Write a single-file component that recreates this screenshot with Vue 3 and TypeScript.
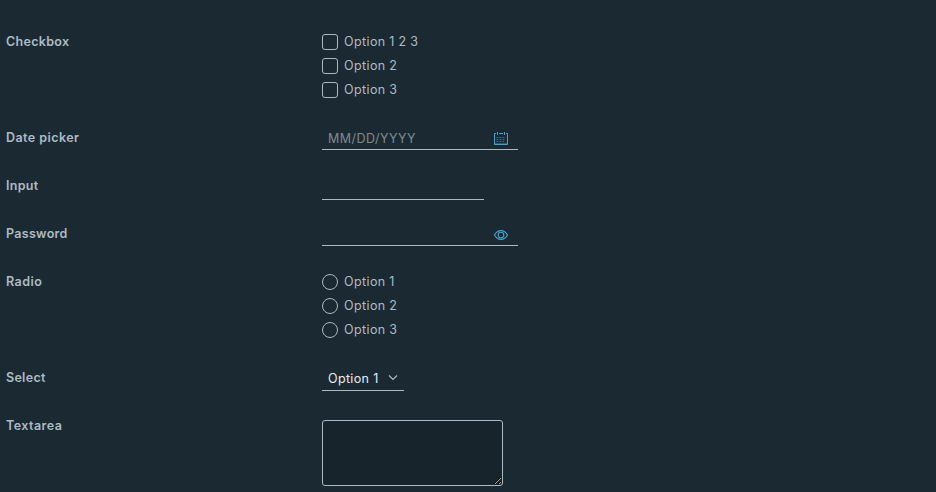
<script setup lang="ts">
import { ref } from 'vue'

const checkboxes = ['Option 1 2 3', 'Option 2', 'Option 3']
const radios = ['Option 1', 'Option 2', 'Option 3']
const checked = ref<string[]>([])
const picked = ref<string>('')
const date = ref<string>('')
const text = ref<string>('')
const password = ref<string>('')
const notes = ref<string>('')
</script>

<template>
  <form class="form" @submit.prevent>
    <div class="row">
      <span class="label">Checkbox</span>
      <div class="options">
        <label v-for="item in checkboxes" :key="item" class="option">
          <input v-model="checked" class="mark box" type="checkbox" :value="item" />
          <span class="option-text">{{ item }}</span>
        </label>
      </div>
    </div>
    <div class="row">
      <label class="label wide" for="date">Date picker</label>
      <div class="field">
        <input id="date" v-model="date" class="date" type="text" placeholder="MM/DD/YYYY" />
        <svg class="icon" viewBox="0 0 16 16" fill="none" stroke="currentColor">
          <path d="M3 3.5H1.5V14.5H14.5V3.5H13M6 3.5H10" />
          <path d="M4.5 2V5M11.5 2V5" />
          <path d="M1.5 13.8H14.5" opacity=".6" />
          <path d="M3.5 7.5H12.5M3.5 9.5H12.5M3.5 11.5H12.5" stroke-dasharray="1.8 1.2" opacity=".6" />
        </svg>
      </div>
    </div>
    <div class="row">
      <label class="label" for="text">Input</label>
      <input id="text" v-model="text" class="plain" type="text" />
    </div>
    <div class="row">
      <label class="label" for="password">Password</label>
      <div class="field">
        <input id="password" v-model="password" type="password" />
        <svg class="icon" viewBox="0 0 16 16" fill="none" stroke="currentColor" stroke-width="1.1">
          <path d="M1.4 9C3 6.2 5.3 4.6 8 4.6S13 6.2 14.6 9C13 11.8 10.7 13.4 8 13.4S3 11.8 1.4 9Z" />
          <circle cx="8" cy="9" r="2.8" />
        </svg>
      </div>
    </div>
    <div class="row">
      <span class="label wide">Radio</span>
      <div class="options">
        <label v-for="item in radios" :key="item" class="option">
          <input v-model="picked" class="mark circle" type="radio" :value="item" />
          <span class="option-text">{{ item }}</span>
        </label>
      </div>
    </div>
    <div class="row">
      <span class="label">Select</span>
      <button class="select" type="button">
        <span>Option 1</span>
        <svg class="caret" viewBox="0 0 10 8" fill="none" stroke="currentColor" stroke-width="1.2">
          <path d="M1 1.5L5 5.5L9 1.5" />
        </svg>
      </button>
    </div>
    <div class="row">
      <label class="label wide" for="notes">Textarea</label>
      <textarea id="notes" v-model="notes"></textarea>
    </div>
  </form>
</template>

<style>
body {
  background: #1b2a32;
  overflow: hidden;
}
</style>

<style scoped>
.form {
  box-sizing: border-box;
  height: 492px;
  padding: 30px 6px 0;
  display: flex;
  flex-direction: column;
  gap: 24px;
  overflow: hidden;
  background: #1b2a32;
  color: #adbbc4;
  font: 400 12.5px/24px Inter, "Liberation Sans", sans-serif;
  letter-spacing: 0.4px;
}
.row {
  display: grid;
  grid-template-columns: 316px 1fr;
  align-items: start;
  min-height: 24px;
}
.row:not(:has(.options)) {
  height: 24px;
}
.label {
  font-weight: 600;
  line-height: 23px;
  letter-spacing: 0.3px;
  justify-self: start;
}
.wide {
  letter-spacing: 0.45px;
}
.options {
  display: flex;
  flex-direction: column;
}
.option {
  display: flex;
  align-items: center;
  align-self: start;
  gap: 6px;
  height: 24px;
}
.option-text {
  height: 24px;
  line-height: 23px;
  word-spacing: -0.2px;
}
.mark {
  appearance: none;
  box-sizing: border-box;
  width: 16px;
  height: 16px;
  margin: 0;
  border: 1px solid #acbac3;
}
.box {
  border-radius: 3px;
}
.circle {
  border-radius: 50%;
}
input,
textarea,
button {
  box-sizing: border-box;
  margin: 0;
  border-radius: 0;
  outline: none;
  color: #e9ecef;
  font: inherit;
  letter-spacing: inherit;
}
.field {
  box-sizing: border-box;
  display: flex;
  align-items: center;
  width: 196px;
  height: 24px;
  padding-right: 9px;
  border-bottom: 1px solid #acbac3;
}
.field input {
  flex: 1;
  min-width: 0;
  height: 23px;
  padding: 3px 6px 0;
  border: 0;
  background: none;
  letter-spacing: 0.48px;
}
.field input::placeholder {
  color: #7f8a90;
  opacity: 1;
}
.icon {
  width: 16px;
  height: 16px;
  color: #45a4cb;
}
.plain {
  width: 162px;
  height: 26px;
  padding: 0 6px;
  border: 0;
  border-bottom: 1px solid #acbac3;
  background: none;
}
.select {
  display: flex;
  align-items: center;
  justify-content: space-between;
  width: 82px;
  height: 25px;
  padding: 0 6px;
  border: 0;
  border-bottom: 1px solid #acbac3;
  background: none;
  letter-spacing: 0.35px;
}
.select span {
  padding-top: 2px;
}
.caret {
  width: 10px;
  height: 8px;
  color: #acbac3;
}
textarea {
  width: 181px;
  height: 66px;
  margin-top: 6px;
  border: 1px solid #acbac3;
  border-radius: 3px;
  background: #17242b;
}
</style>
